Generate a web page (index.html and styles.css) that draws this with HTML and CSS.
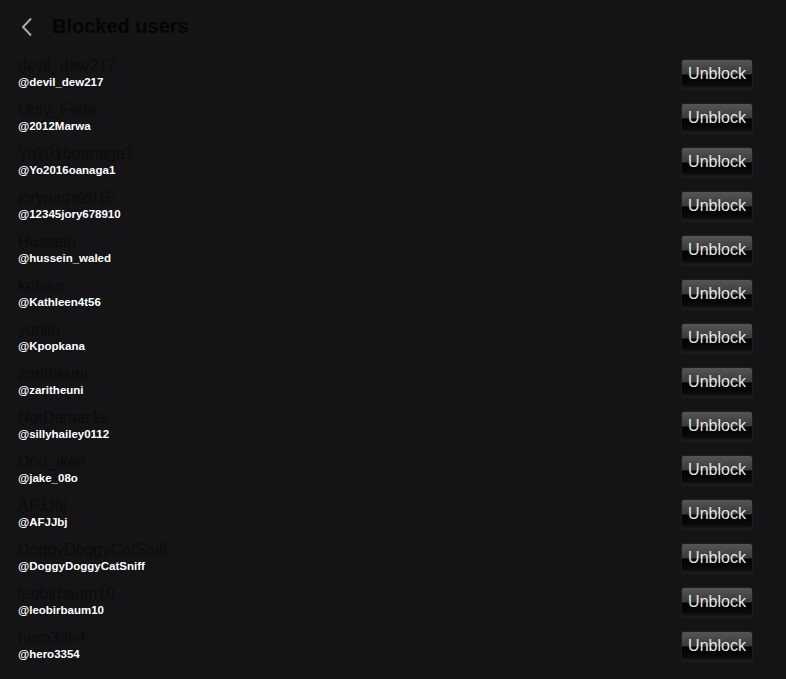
FILE: index.html
```html
<!DOCTYPE html>
<html>
<head>
<meta charset="utf-8">
<link rel="stylesheet" href="styles.css">
</head>
<body>
<div class="page">
  <header class="header">
    <svg class="back" width="14" height="20" viewBox="0 0 14 20"><path d="M11 1.5 L3 10 L11 18.5" fill="none" stroke="#a8a8a8" stroke-width="2"/></svg>
    <h1 class="title">Blocked users</h1>
  </header>
  <ul class="list">
    <li class="row"><div class="info"><div class="name">devil_dew217</div><div class="handle">@devil_dew217</div></div><button class="unblock">Unblock</button></li>
    <li class="row"><div class="info"><div class="name">Only_Fede</div><div class="handle">@2012Marwa</div></div><button class="unblock">Unblock</button></li>
    <li class="row"><div class="info"><div class="name">Yo2016oanaga1</div><div class="handle">@Yo2016oanaga1</div></div><button class="unblock">Unblock</button></li>
    <li class="row"><div class="info"><div class="name">jorynaga2015</div><div class="handle">@12345jory678910</div></div><button class="unblock">Unblock</button></li>
    <li class="row"><div class="info"><div class="name">Hussein</div><div class="handle">@hussein_waled</div></div><button class="unblock">Unblock</button></li>
    <li class="row"><div class="info"><div class="name">kelsea</div><div class="handle">@Kathleen4t56</div></div><button class="unblock">Unblock</button></li>
    <li class="row"><div class="info"><div class="name">yunjin</div><div class="handle">@Kpopkana</div></div><button class="unblock">Unblock</button></li>
    <li class="row"><div class="info"><div class="name">zaritheuni</div><div class="handle">@zaritheuni</div></div><button class="unblock">Unblock</button></li>
    <li class="row"><div class="info"><div class="name">NotDamar1s</div><div class="handle">@sillyhailey0112</div></div><button class="unblock">Unblock</button></li>
    <li class="row"><div class="info"><div class="name">Dnd_ikee</div><div class="handle">@jake_08o</div></div><button class="unblock">Unblock</button></li>
    <li class="row"><div class="info"><div class="name">AFJJbj</div><div class="handle">@AFJJbj</div></div><button class="unblock">Unblock</button></li>
    <li class="row"><div class="info"><div class="name">DoggyDoggyCatSniff</div><div class="handle">@DoggyDoggyCatSniff</div></div><button class="unblock">Unblock</button></li>
    <li class="row"><div class="info"><div class="name">leobirbaum10</div><div class="handle">@leobirbaum10</div></div><button class="unblock">Unblock</button></li>
    <li class="row"><div class="info"><div class="name">hero3354</div><div class="handle">@hero3354</div></div><button class="unblock">Unblock</button></li>
  </ul>
</div>
</body>
</html>
```
FILE: styles.css
```css
html, body {
  margin: 0;
  padding: 0;
  background: #141416;
  font-family: "Liberation Sans", Arial, sans-serif;
}
.page {
  padding: 0 33px 0 18px;
}
.header {
  display: flex;
  align-items: center;
  height: 54px;
  gap: 18px;
  padding-left: 2px;
}
.back {
  display: block;
}
.title {
  margin: 0 0 2px 0;
  font-size: 20px;
  font-weight: bold;
  color: #050505;
}
.list {
  list-style: none;
  margin: 0;
  padding: 3px 0 0 0;
}
.row {
  display: flex;
  justify-content: space-between;
  align-items: flex-start;
  height: 44px;
}
.name {
  font-size: 16px;
  line-height: 18px;
  color: #0b0b0b;
}
.handle {
  font-size: 11.5px;
  line-height: 14px;
  font-weight: bold;
  color: #ffffff;
}
.unblock {
  margin-top: 2px;
  width: 72px;
  height: 31px;
  padding: 0 0 2px 0;
  border: 1px solid #1e1e1e;
  border-radius: 3px;
  background: linear-gradient(to bottom, #555555 0%, #3a3a3a 48%, #000000 52%, #0a0a0a 85%, #1c1c1c 100%);
  color: #e6e6e6;
  font-family: "Liberation Sans", Arial, sans-serif;
  font-size: 16px;
  text-align: center;
}
```
